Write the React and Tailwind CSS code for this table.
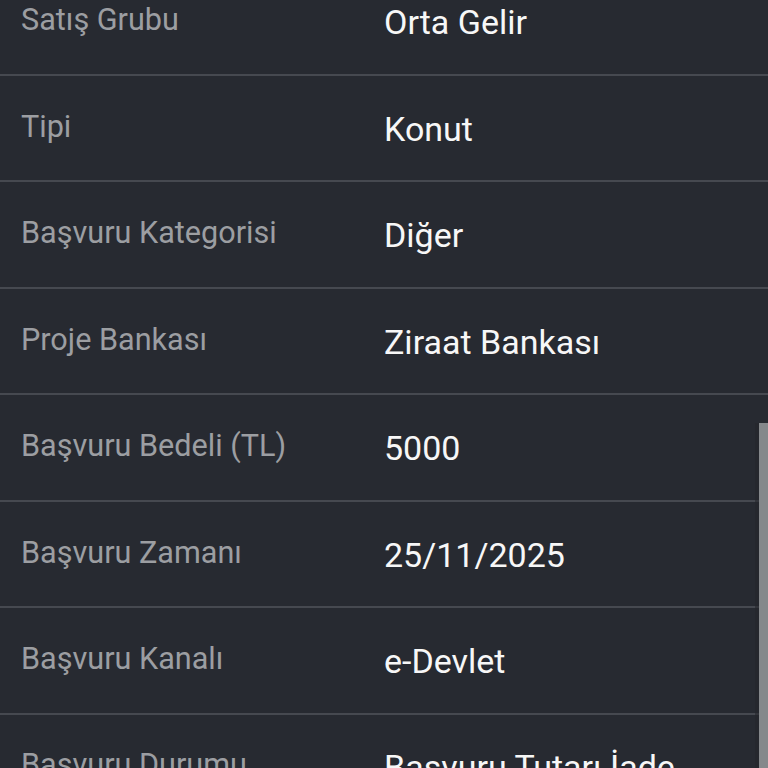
const rows = [
  { label: "Satış Grubu", value: "Orta Gelir" },
  { label: "Tipi", value: "Konut" },
  { label: "Başvuru Kategorisi", value: "Diğer" },
  { label: "Proje Bankası", value: "Ziraat Bankası" },
  { label: "Başvuru Bedeli (TL)", value: "5000" },
  { label: "Başvuru Zamanı", value: "25/11/2025" },
  { label: "Başvuru Kanalı", value: "e-Devlet" },
  { label: "Başvuru Durumu", value: "Başvuru Tutarı İade Edildi" },
];

const App = () => {
  return (
    <div
      className="relative w-[768px] h-[768px] overflow-hidden bg-[#272a31]"
      style={{ fontFamily: "Roboto, 'Noto Sans', sans-serif" }}
    >
      {/* list is scrolled part-way, first row cut at the top */}
      <div className="-mt-[30.5px]">
        {rows.map((row) => (
          <div
            key={row.label}
            className="flex items-start border-b-2 border-[#464950] pt-[32.6px] pb-[31.9px] pl-[21px] pr-[28px]"
          >
            <div className="w-[363px] shrink-0 text-[30.6px] leading-[36px] text-[#9c9ea2]">
              {row.label}
            </div>
            <div className="flex-1 text-[34px] leading-[40px] text-[#f7f7f7]">
              {row.value}
            </div>
          </div>
        ))}
      </div>

      {/* scrollbar */}
      <div className="absolute right-0 top-[423px] bottom-0 w-[13px] bg-[#24272c]/60">
        <div className="ml-auto h-full w-[9px] bg-[#85888b]" />
      </div>
    </div>
  );
};

export default App;
